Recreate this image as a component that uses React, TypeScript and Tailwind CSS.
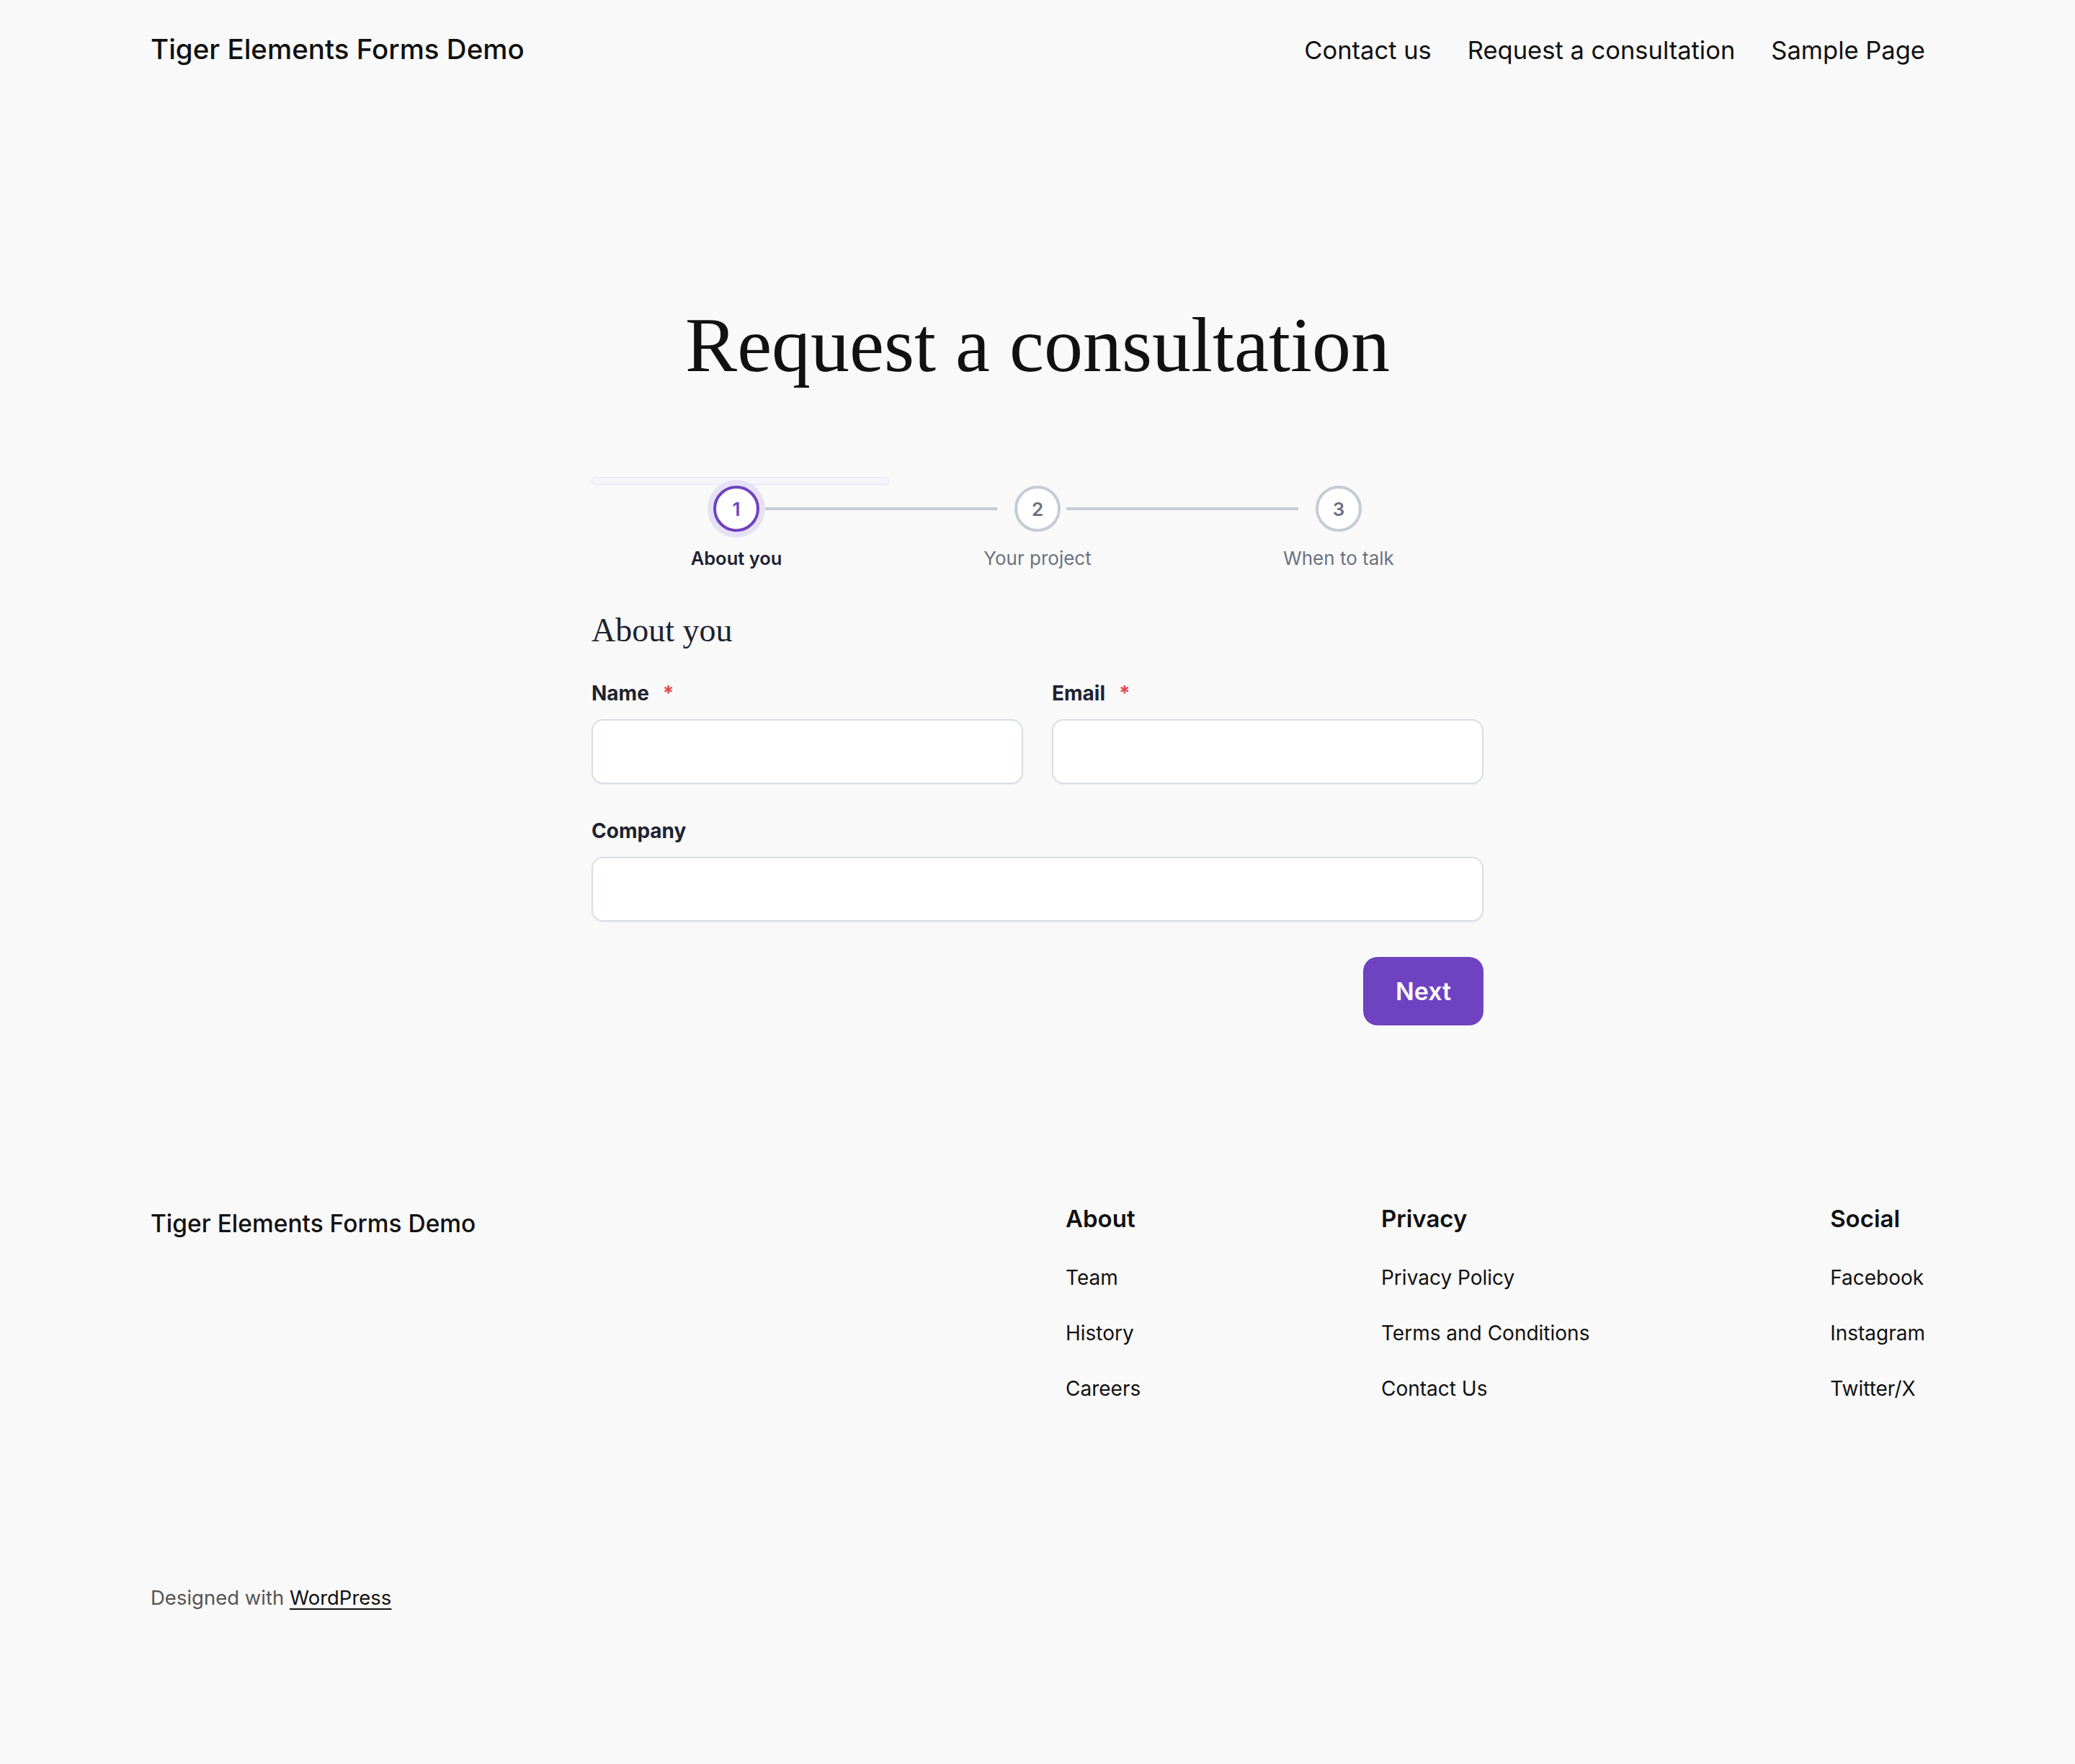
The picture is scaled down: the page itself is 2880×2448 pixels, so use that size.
import React from "react";

const steps = [
  { n: "1", label: "About you", active: true },
  { n: "2", label: "Your project", active: false },
  { n: "3", label: "When to talk", active: false },
];

const columns = [
  { title: "About", links: ["Team", "History", "Careers"] },
  { title: "Privacy", links: ["Privacy Policy", "Terms and Conditions", "Contact Us"] },
  { title: "Social", links: ["Facebook", "Instagram", "Twitter/X"] },
];

function Label({ text, required }: { text: string; required?: boolean }) {
  return (
    <div className="flex items-baseline text-[28px] leading-[34px] font-bold text-[#1e2330]">
      <span>{text}</span>
      {required && <span className="ml-[19px] text-[#e5484d]">*</span>}
    </div>
  );
}

function Input() {
  return (
    <div className="mt-[19px] h-[90px] w-full rounded-[16px] border-2 border-[#d9dde8] bg-white shadow-[0_1px_2px_rgba(16,24,40,0.05)]" />
  );
}

export default function App() {
  return (
    <div className="min-h-[2448px] bg-[#f9f9f9] font-['Inter',sans-serif] text-[#111111]">
      {/* Header */}
      <header className="flex items-baseline justify-between pl-[209px] pr-[208px] pt-[44px]">
        <div className="text-[38.5px] leading-[48px] font-medium">Tiger Elements Forms Demo</div>
        <nav className="flex items-baseline gap-[50px] text-[34.5px] leading-[42px]">
          <span>Contact us</span>
          <span>Request a consultation</span>
          <span>Sample Page</span>
        </nav>
      </header>

      {/* Main */}
      <main>
        <h1 className="mt-[333px] text-center font-['Liberation_Serif',serif] text-[108px] leading-[108px] font-normal text-[#111111]">
          Request a consultation
        </h1>

        <div className="mx-auto w-[1238px]">
          {/* progress bar */}
          <div className="mt-[129px] h-[11px] w-1/3 rounded-full border border-[#e6e3f4] bg-[#f5f4fb]" />

          {/* stepper */}
          <div className="-mx-[8px] -mt-[7px] grid grid-cols-3">
            {steps.map((s, i) => (
              <div key={s.n} className="relative flex flex-col items-center">
                {i < steps.length - 1 && (
                  <div className="absolute left-[calc(50%+40px)] top-[38px] h-[4px] w-[calc(100%-96px)] bg-[#c5cbd6]" />
                )}
                <div
                  className={
                    s.active
                      ? "flex h-[80px] w-[80px] items-center justify-center rounded-full bg-[#e7e1f5]"
                      : "flex h-[80px] w-[80px] items-center justify-center rounded-full"
                  }
                >
                  <div
                    className={
                      s.active
                        ? "flex h-[64px] w-[64px] items-center justify-center rounded-full border-[4px] border-[#6f42c1] bg-white text-[26px] font-semibold text-[#6f42c1]"
                        : "flex h-[64px] w-[64px] items-center justify-center rounded-full border-[4px] border-[#c5cbd6] bg-white text-[26px] font-semibold text-[#6b7280]"
                    }
                  >
                    {s.n}
                  </div>
                </div>
                <div
                  className={
                    s.active
                      ? "mt-[12px] text-[25.5px] leading-[34px] font-semibold text-[#1e2330]"
                      : "mt-[12px] text-[26px] leading-[34px] font-normal text-[#6b7280]"
                  }
                >
                  {s.label}
                </div>
              </div>
            ))}
          </div>

          <h2 className="mt-[56px] font-['Liberation_Serif',serif] text-[46px] leading-[54px] font-normal text-[#1e2330]">
            About you
          </h2>

          <div className="mt-[43px] grid grid-cols-2 gap-x-[40px]">
            <div>
              <Label text="Name" required />
              <Input />
            </div>
            <div>
              <Label text="Email" required />
              <Input />
            </div>
          </div>

          <div className="mt-[48px]">
            <Label text="Company" />
            <Input />
          </div>

          <div className="mt-[49px] flex justify-end">
            <button className="flex h-[95px] w-[167px] items-center justify-center rounded-[20px] bg-[#6f42c1] text-[34px] font-semibold text-white">
              Next
            </button>
          </div>
        </div>
      </main>

      {/* Footer */}
      <footer className="mt-[248px] pl-[209px] pr-[208px]">
        <div className="flex items-start justify-between">
          <div className="pt-[5px] text-[33.5px] leading-[44px] font-medium">Tiger Elements Forms Demo</div>
          <div className="flex w-[1193px] items-start justify-between">
            {columns.map((c) => (
              <div key={c.title} className="flex flex-col">
                <div className="text-[33px] leading-[40px] font-semibold">{c.title}</div>
                <ul className="mt-[44px] flex flex-col gap-[41px] text-[28px] leading-[36px]">
                  {c.links.map((l) => (
                    <li key={l}>{l}</li>
                  ))}
                </ul>
              </div>
            ))}
          </div>
        </div>
        <div className="mt-[254px] text-[27.5px] leading-[36px] text-[#555555]">
          Designed with{" "}
          <span className="text-[#111111] underline underline-offset-[5px] decoration-[2px]">WordPress</span>
        </div>
      </footer>
    </div>
  );
}
